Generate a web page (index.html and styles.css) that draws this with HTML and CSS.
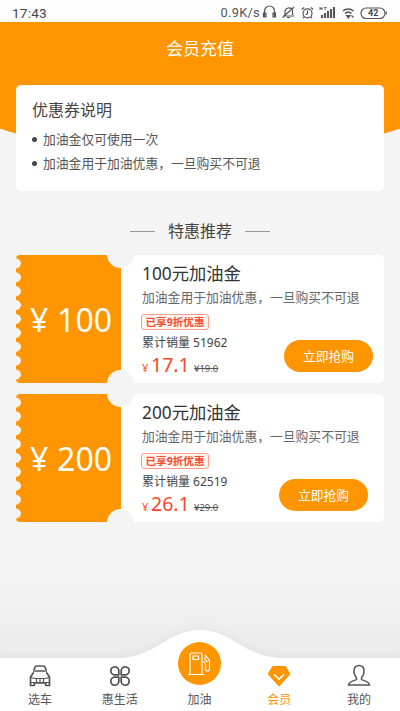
FILE: index.html
```
<!DOCTYPE html>
<html lang="zh-CN">
<head>
<meta charset="utf-8">
<title>会员充值</title>
<link rel="stylesheet" href="styles.css">
</head>
<body>
<div class="app">
  <div class="status">
    <span class="time">17:43</span>
    <span class="speed">0.9K/s</span>
    <svg class="sys" width="132" height="18" viewBox="0 0 132 18" fill="none" stroke="#555" stroke-width="1.2">
      <path d="M4.500 15.500V10a5 5 0 0 1 10 0v5.500M3.500 12v4h2.500v-4zM13 12v4h2.500v-4z"/>
      <path d="M23 15h11M25 14V10.500a4 4 0 0 1 7.500-1.500V14M27 16.500h3M22.500 16.500L34 6"/>
      <circle cx="47.500" cy="12.300" r="4.500"/><path d="M47.500 9.500v3l-1.800 1.200M41.800 8.500l2.400-2M53.200 8.500l-2.400-2M44 16l-1 1.200M51 16l1 1.200"/>
      <path d="M60 6v3M62 6v3M60 7.500h2M64 6.500h2.500M65 6.500v2.500" stroke-width=".9"/>
      <path d="M62 17v-3M65 17v-5M68 17v-7M71 17V8M74 17V6" stroke-width="2.100"/>
      <path d="M83 10a8 8 0 0 1 10.500 0M85 12.500a5 5 0 0 1 6.500 0" stroke-width="1.600"/><path d="M86.500 14.500L88.300 17l1.800-2.500zM91.500 14.500l2 2" fill="#555"/>
      <rect x="101" y="7" width="24" height="10.500" rx="5.200"/><path d="M126.300 10.500v3"/>
      <text x="113.200" y="15.300" text-anchor="middle" class="battery">42</text>
    </svg>
  </div>
  <header class="hero">
    <h1>会员充值</h1>
    <section class="notice">
      <h2>优惠券说明</h2>
      <ul>
        <li>加油金仅可使用一次</li>
        <li>加油金用于加油优惠，一旦购买不可退</li>
      </ul>
    </section>
  </header>
  <main>
    <h3 class="section-title">特惠推荐</h3>
    <article class="coupon">
      <div class="stub"><span class="yen">¥</span>100</div>
      <div class="info">
        <h4>100元加油金</h4>
        <p class="desc">加油金用于加油优惠，一旦购买不可退</p>
        <span class="tag">已享9折优惠</span>
        <p class="sales">累计销量 51962</p>
        <p class="price"><small>¥</small><b>17.1</b><s>¥19.0</s></p>
      </div>
      <button class="buy">立即抢购</button>
    </article>
    <article class="coupon">
      <div class="stub"><span class="yen">¥</span>200</div>
      <div class="info">
        <h4>200元加油金</h4>
        <p class="desc">加油金用于加油优惠，一旦购买不可退</p>
        <span class="tag">已享9折优惠</span>
        <p class="sales">累计销量 62519</p>
        <p class="price"><small>¥</small><b>26.1</b><s>¥29.0</s></p>
      </div>
      <button class="buy shifted">立即抢购</button>
    </article>
  </main>
  <nav class="tabs">
    <svg class="tabs-bg" width="400" height="82" viewBox="0 0 400 82"><path d="M0 29H120C156 28 168 1 200 1S244 28 280 29H400V82H0z" fill="#fff"/></svg>
    <a class="tab">
      <svg width="24" height="24" viewBox="0 0 24 24" fill="none" stroke="#555" stroke-width="1.700" stroke-linejoin="round">
        <path d="M5.800 6.500L7 3Q7.300 2 8.500 2h7q1.200 0 1.500 1l1.200 3.500M7 7h10M5 7.500h1.500M17.500 7.500H19M5.500 8.500L2.500 13v8.500h3.800V19h11.400v2.500h3.800V13L18.500 8.500"/>
        <path d="M3 13.500l4 1h10l4-1M3 18.500h18M8.500 15v3M12 15v3M15.500 15v3" stroke-width="1.200"/>
      </svg>
      <span>选车</span>
    </a>
    <a class="tab">
      <svg width="24" height="24" viewBox="0 0 24 24" fill="none" stroke="#555" stroke-width="1.800">
        <path d="M10.800 10.800H6.500A4 4 0 1 1 10.800 6.500zM13.200 10.800h4.300A4 4 0 1 0 13.200 6.500zM10.800 13.200H6.500A4 4 0 1 0 10.800 17.500zM13.200 13.200h4.300A4 4 0 1 1 13.200 17.500z" stroke-linejoin="round"/>
      </svg>
      <span>惠生活</span>
    </a>
    <a class="tab center">
      <i class="fuel">
        <svg width="26" height="26" viewBox="0 0 26 26" fill="none" stroke="#fff" stroke-width="1.200">
          <path d="M4 23V3.500Q4 2 5.500 2h9Q16 2 16 3.500V23M2 23.500h16M7 5h5.500v3.500H7zM16 11h2q1.500 0 1.500 2v5q0 2 2 2t2-2v-7q0-2-2-4l-2.500-3M19 6v3l2.500 2"/>
        </svg>
      </i>
      <span>加油</span>
    </a>
    <a class="tab active">
      <svg width="24" height="24" viewBox="0 0 24 24"><path d="M5.500 2h13L23.500 10 13 21.500q-1 1-2 0L.5 10z" fill="#ff9500"/><path d="M7 10.500l5 4.700 5-4.700" fill="none" stroke="#fff" stroke-width="1.600"/></svg>
      <span>会员</span>
    </a>
    <a class="tab">
      <svg width="24" height="24" viewBox="0 0 24 24" fill="none" stroke="#555" stroke-width="1.500">
        <path d="M9.500 13.500C7.500 12 7 10 7 7c0-3.500 2-5.500 5-5.500S17 3.500 17 7c0 3-.5 5-2.500 6.500v2c2 1.500 7.500 1.500 8 5.500h-21c.5-4 6-4 8-5.500z"/>
      </svg>
      <span>我的</span>
    </a>
  </nav>
</div>
</body>
</html>
```

FILE: styles.css
```
* { box-sizing: border-box; margin: 0; padding: 0; }
body {
  width: 400px; height: 711px; overflow: hidden;
  font-family: "Noto Sans", "Noto Sans CJK SC", sans-serif;
  color: #444; font-size: 12.8px;
}
.app {
  height: 711px; display: flex; flex-direction: column;
  background: linear-gradient(#f4f4f4 570px, #ebebeb 660px);
}
.status { height: 22px; background: #fefefe; display: flex; align-items: center; padding: 3px 8px 0 12px; }
.time { font: 13.6px/18px Roboto, sans-serif; letter-spacing: .2px; margin-right: auto; }
.speed { font: 12.8px/18px Roboto, sans-serif; color: #555; letter-spacing: .3px; }
.sys { display: block; margin-top: -6px; }
.battery { font: bold 9px Roboto, sans-serif; fill: #444; stroke: none; }
.hero {
  height: 169px; padding: 0 16px;
  background: radial-gradient(ellipse 324px 136px at 50% 0, #ff9500 99.500%, transparent 100%);
}
h1 { height: 63px; line-height: 53px; text-align: center; color: #fff; font-size: 17px; font-weight: 400; }
.notice { height: 106px; background: #fff; border-radius: 5px; padding: 13px 16px; }
h2 { font-size: 16px; line-height: 24px; font-weight: 400; }
ul { list-style: none; padding-top: 5px; }
li { display: flex; align-items: center; line-height: 24px; color: #555; white-space: nowrap; }
li::before { content: ""; width: 5px; height: 5px; border-radius: 50%; background: #444; margin-right: 6px; }
main { padding: 0 16px; }
.section-title {
  height: 64px; padding-top: 16px; display: flex; justify-content: center; gap: 13px;
  font-size: 16px; line-height: 48px; font-weight: 400;
}
.section-title::before, .section-title::after { content: ""; width: 25px; height: 1px; background: #999; margin-top: 24px; }
.coupon { position: relative; display: flex; height: 128px; margin-bottom: 11px; background: #fff; border-radius: 5px; }
.coupon::before, .coupon::after {
  content: ""; position: absolute; left: 91px; width: 27px; height: 14px; background: #f4f4f4;
}
.coupon::before { top: -1px; border-radius: 0 0 14px 14px; }
.coupon::after { bottom: -1px; border-radius: 14px 14px 0 0; }
.stub {
  width: 105px; padding: 0 9px 0 14px; color: #fff; font-size: 32px; line-height: 129px;
  display: flex; justify-content: space-between; border-radius: 4px 0 0 4px;
  background: radial-gradient(circle at 0 7px, #f4f4f4 4.500px, #ff9500 5.200px) 0 1.500px / 100% 13.880px;
}
.yen { font-size: 32px; }
.info { padding: 6px 0 0 21px; white-space: nowrap; }
h4 { font-size: 17.300px; line-height: 26px; font-weight: 400; color: #333; }
.desc { line-height: 20px; color: #666; }
.tag {
  display: block; width: 68px; height: 16px; margin: 7px 0 0 -1px; border: 1px solid #ff9c8c; border-radius: 3px;
  background: #fff5f3; color: #fb4a2b; font-size: 10.600px; font-weight: 700; line-height: 14px; text-align: center;
}
.sales { font-size: 12px; line-height: 18px; margin-top: 4px; }
.price { display: flex; align-items: baseline; height: 27px; line-height: 26px; color: #f9482c; }
.price small { width: 9px; font-size: 11px; }
.price b { width: 43px; font-size: 19.500px; font-weight: 400; }
.price s { font-size: 9.500px; color: #555; }
.buy {
  position: absolute; right: 11px; top: 85px; width: 89px; height: 32px; border: 0; border-radius: 16px;
  background: #ff9500; color: #fff; font: 12.800px/32px "Noto Sans", "Noto Sans CJK SC", sans-serif;
}
.buy.shifted { right: 16px; }
.tabs { position: relative; height: 82px; margin-top: auto; display: flex; padding-right: 1px; }
.tabs-bg { position: absolute; left: 0; top: 0; filter: drop-shadow(0 -2px 4px rgba(0,0,0,.04)); }
.tab {
  position: relative; flex: 1; display: flex; flex-direction: column; align-items: center;
  padding-top: 35px; font-size: 12px; line-height: 16px; color: #555;
}
.tab svg { display: block; }
.tab span { margin-top: 4px; }
.center { padding-top: 13px; }
.fuel { width: 43px; height: 43px; border-radius: 50%; background: #ff9500; display: grid; place-items: center; }
.center span { margin-top: 7px; }
.active { color: #ff9500; }
```
